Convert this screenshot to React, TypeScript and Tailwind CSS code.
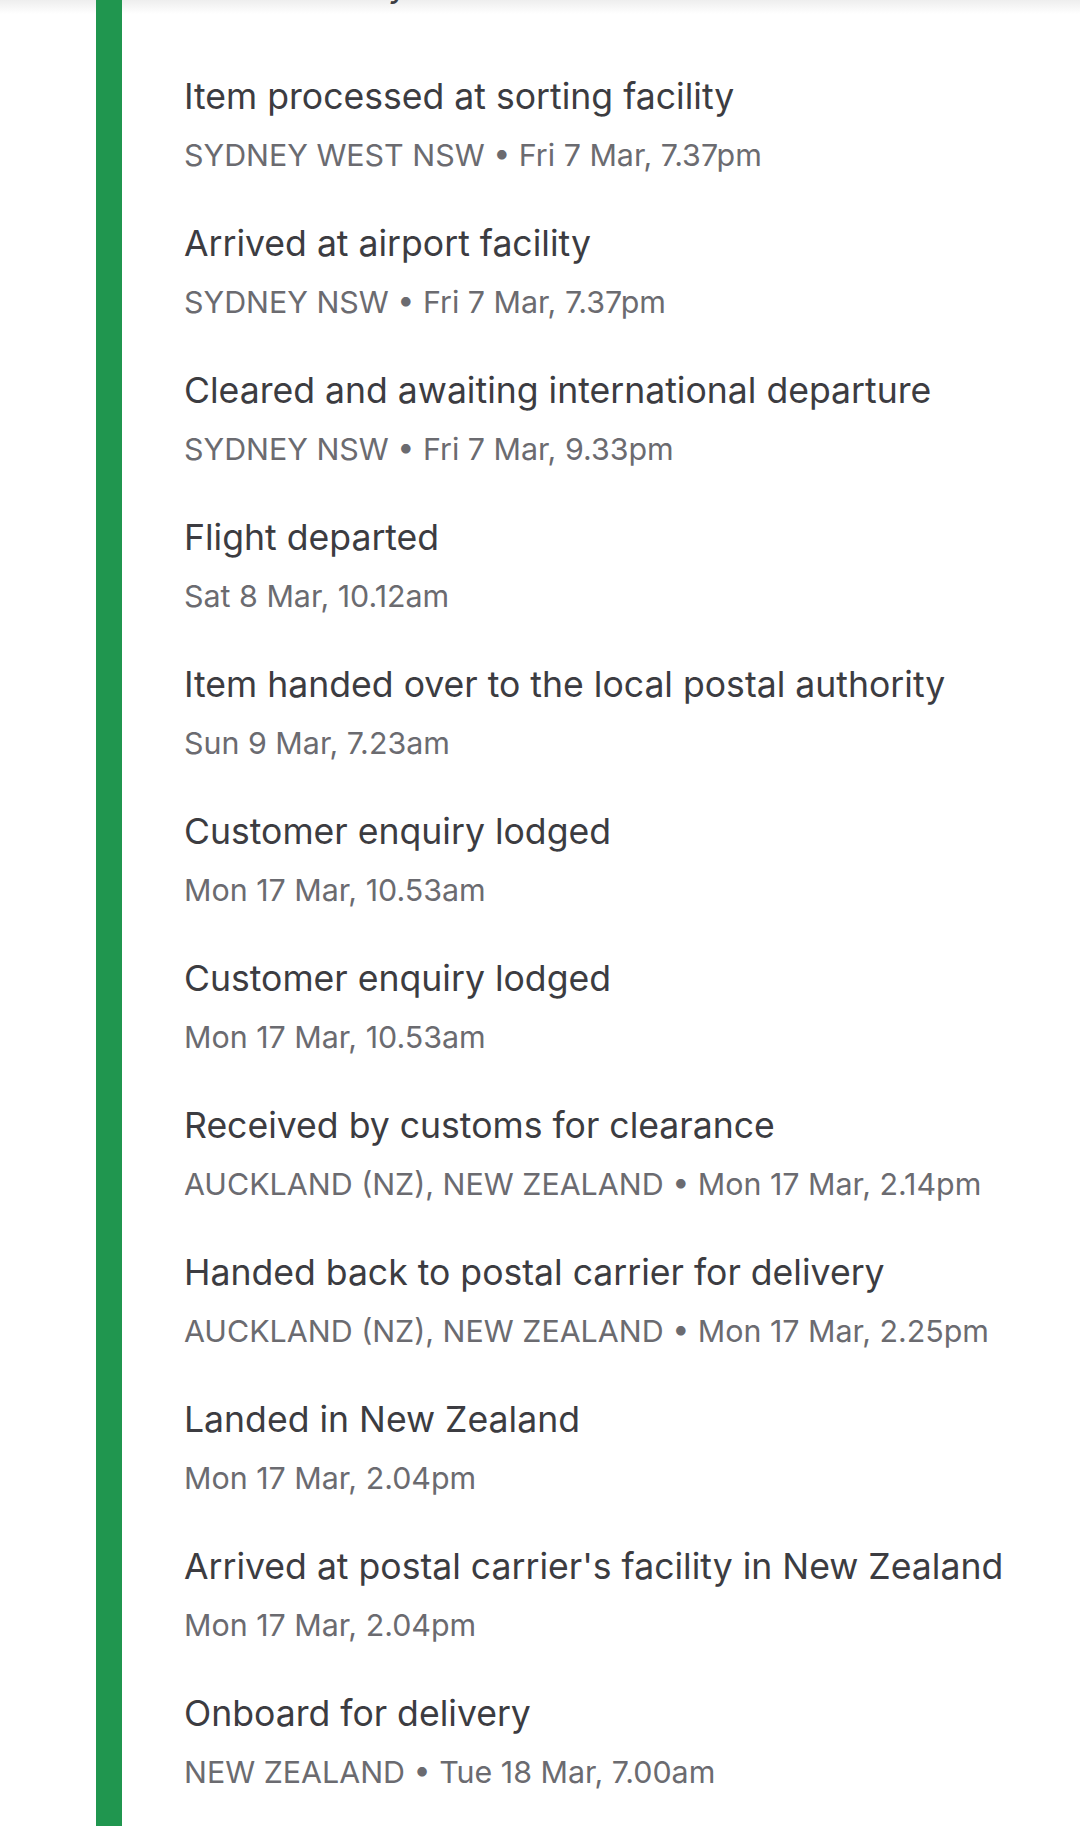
import React from 'react';

const events = [
  { title: 'Item processed at sorting facility', detail: 'SYDNEY WEST NSW • Fri 7 Mar, 7.37pm' },
  { title: 'Arrived at airport facility', detail: 'SYDNEY NSW • Fri 7 Mar, 7.37pm' },
  { title: 'Cleared and awaiting international departure', detail: 'SYDNEY NSW • Fri 7 Mar, 9.33pm' },
  { title: 'Flight departed', detail: 'Sat 8 Mar, 10.12am' },
  { title: 'Item handed over to the local postal authority', detail: 'Sun 9 Mar, 7.23am' },
  { title: 'Customer enquiry lodged', detail: 'Mon 17 Mar, 10.53am' },
  { title: 'Customer enquiry lodged', detail: 'Mon 17 Mar, 10.53am' },
  { title: 'Received by customs for clearance', detail: 'AUCKLAND (NZ), NEW ZEALAND • Mon 17 Mar, 2.14pm' },
  { title: 'Handed back to postal carrier for delivery', detail: 'AUCKLAND (NZ), NEW ZEALAND • Mon 17 Mar, 2.25pm' },
  { title: 'Landed in New Zealand', detail: 'Mon 17 Mar, 2.04pm' },
  { title: "Arrived at postal carrier's facility in New Zealand", detail: 'Mon 17 Mar, 2.04pm' },
  { title: 'Onboard for delivery', detail: 'NEW ZEALAND • Tue 18 Mar, 7.00am' },
];

export default function App() {
  return (
    <div
      className="w-[1080px] h-[1826px] overflow-hidden bg-[linear-gradient(to_bottom,#eeeeee_0px,#ffffff_14px)]"
      style={{ fontFamily: 'Inter, "Noto Sans", sans-serif' }}
    >
      <div className="flex h-full pl-[96px]">
        {/* Timeline rail */}
        <div className="w-[26px] h-full bg-[#20964f] shrink-0" />

        <div className="flex flex-col pl-[62px]">
          {/* Previous heading, scrolled off the top */}
          <div className="h-[4px] flex flex-col justify-end overflow-hidden text-[35px] leading-[40px] text-[#3d3d42]">
            <span className="pl-[204px]">y</span>
          </div>

          <div className="flex flex-col gap-[49px] pt-[73px]">
            {events.map((e, i) => (
              <div key={i} className="flex flex-col gap-[18px]">
                <div className="text-[35.6px] leading-[40px] text-[#3c3c41]">{e.title}</div>
                <div className="text-[30.4px] leading-[40px] text-[#6b6b70]">{e.detail}</div>
              </div>
            ))}
          </div>
        </div>
      </div>
    </div>
  );
}
